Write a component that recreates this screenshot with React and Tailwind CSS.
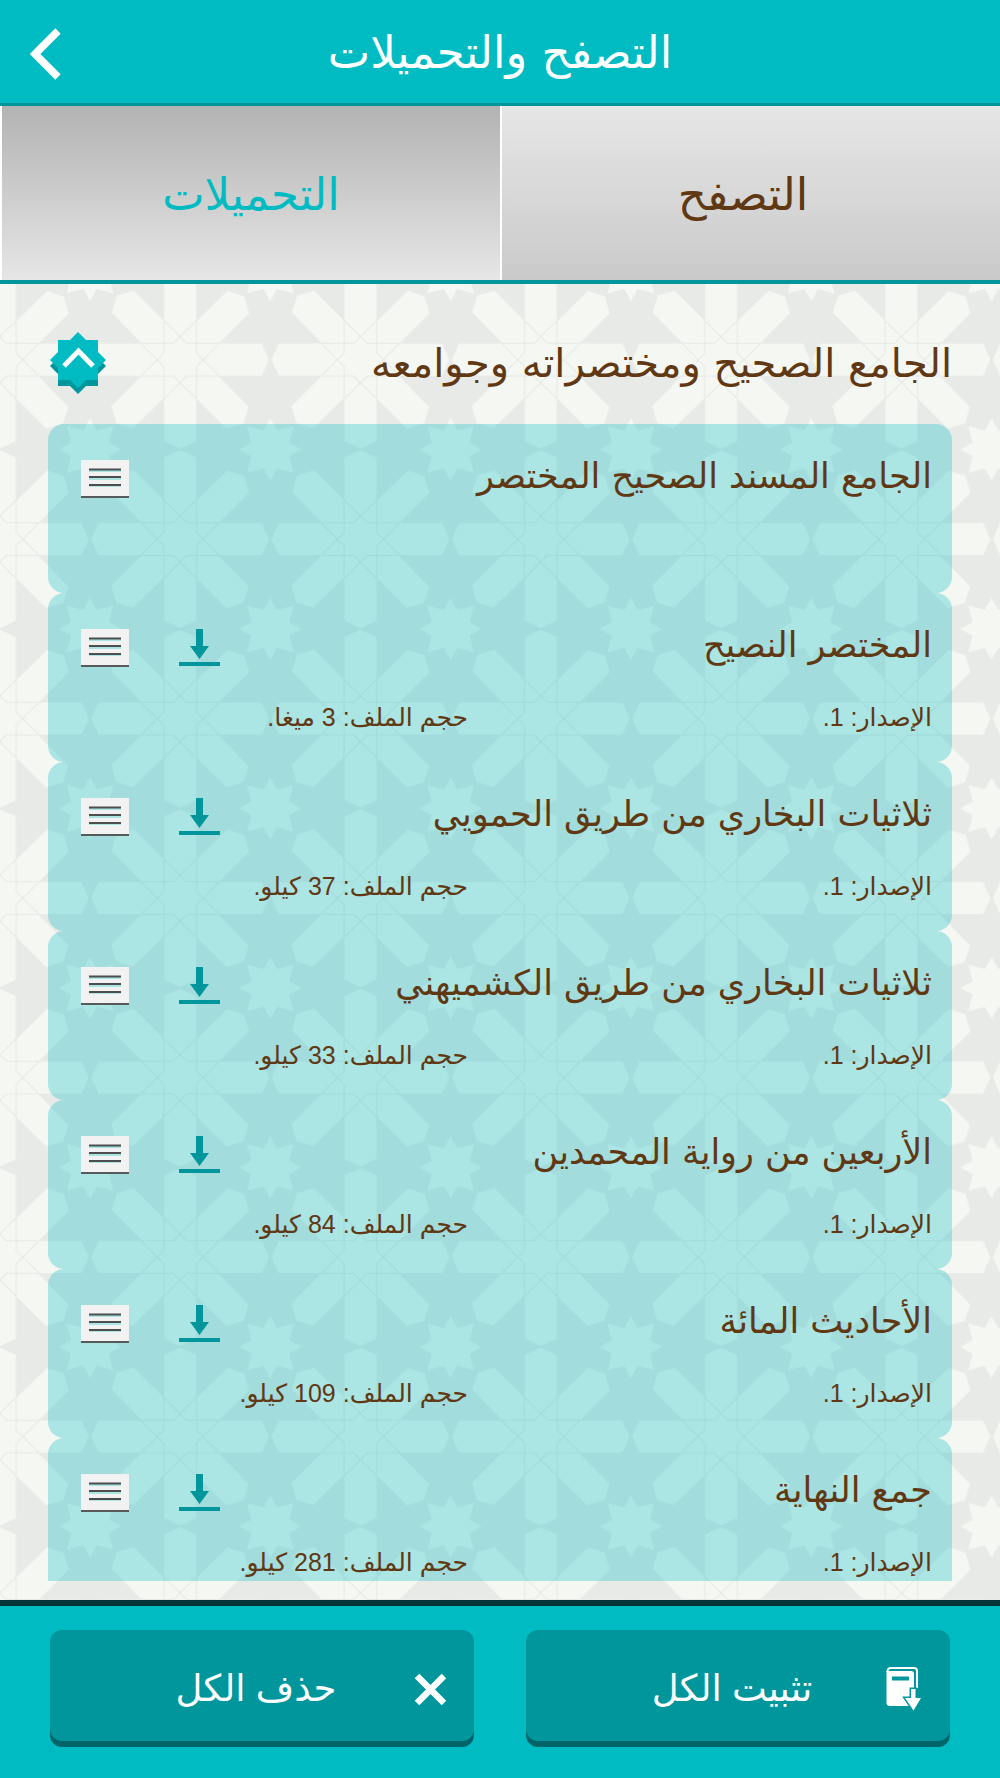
import React from 'react';

const books = [
  { title: 'الجامع المسند الصحيح المختصر' },
  { title: 'المختصر النصيح', version: '1', size: '3 ميغا' },
  { title: 'ثلاثيات البخاري من طريق الحمويي', version: '1', size: '37 كيلو' },
  { title: 'ثلاثيات البخاري من طريق الكشميهني', version: '1', size: '33 كيلو' },
  { title: 'الأربعين من رواية المحمدين', version: '1', size: '84 كيلو' },
  { title: 'الأحاديث المائة', version: '1', size: '109 كيلو' },
  { title: 'جمع النهاية', version: '1', size: '281 كيلو' },
];

const ANGLES = [0, 90, 180, 270];

const STAR = '0,-94 20,-57 70,-70 57,-20 94,0 57,20 70,70 20,57 0,94 -20,57 -70,70 -57,20 -94,0 -57,-20 -70,-70 -20,-57';

// Eight-armed flower in the middle of the tile, a small star on each corner
const Wallpaper = () => (
  <svg className="absolute inset-0 w-full h-full" aria-hidden="true">
    <defs>
      <pattern
        id="arabesque"
        width="541"
        height="538.5"
        patternUnits="userSpaceOnUse"
        patternTransform="translate(90 -14) scale(0.3333)"
      >
        <rect width="541" height="539" fill="#e8eae7" />
        <g fill="#f5f7f2">
          {[[0, 0], [541, 0], [0, 538.5], [541, 538.5]].map(([x, y]) => (
            <polygon key={`${x}-${y}`} points={STAR} transform={`translate(${x} ${y})`} />
          ))}
        </g>
        <g transform="translate(270.5 269)">
          {ANGLES.map((a) => (
            <g key={a} transform={`rotate(${a})`} fill="#f5f7f2">
              <polygon points="-48,0 -48,-245 0,-267 48,-245 48,0" />
              <polygon points="0,68 -34,34 -34,-34 142,-206 192,-190 207,-139 34,34" />
            </g>
          ))}
          {ANGLES.map((a) => (
            <g key={a} transform={`rotate(${a})`} fill="none" stroke="#e6e9e6" strokeWidth="3">
              <path d="M117 -49 H20 L-48 -117" />
              <path d="M-117 -49 H-20 L48 -117" />
            </g>
          ))}
        </g>
      </pattern>
    </defs>
    <rect width="100%" height="100%" fill="url(#arabesque)" />
  </svg>
);

const BackIcon = () => (
  <svg width="32" height="52" viewBox="0 0 32 52" fill="none" stroke="#fff" strokeWidth="7.500">
    <path d="M28 3 L5 26 L28 49" />
  </svg>
);

const CollapseIcon = () => (
  <svg width="56" height="62" viewBox="0 0 56 62">
    <g fill="#00969b">
      <rect x="8" y="14" width="40" height="40" />
      <path d="M28 6 L56 34 L28 62 L0 34 Z" />
    </g>
    <g fill="#00bcc2">
      <rect x="8" y="8" width="40" height="40" />
      <path d="M28 0 L56 28 L28 56 L0 28 Z" />
    </g>
    <path d="M14 34 L28.500 19 L43 34" fill="none" stroke="#fff" strokeWidth="5" />
  </svg>
);

const MenuIcon = () => (
  <svg width="48" height="38" viewBox="0 0 48 38">
    <rect width="48" height="36" fill="#f2f2f2" />
    <rect y="36" width="48" height="2" fill="#58595b" />
    <g fill="#abe5e2">
      <rect x="8" y="10" width="32" height="2" />
      <rect x="8" y="18" width="32" height="2" />
      <rect x="8" y="25" width="32" height="2" />
    </g>
    <g fill="#4d4d4f">
      <rect x="8" y="8.500" width="32" height="2" />
      <rect x="8" y="16" width="32" height="2" />
      <rect x="8" y="24" width="32" height="2" />
    </g>
  </svg>
);

const DownloadIcon = () => (
  <svg width="41" height="38" viewBox="0 0 41 38" fill="#00969b">
    <path d="M17 0 H24 V17 H30 L20.500 30 L11 17 H17 Z" />
    <rect y="33" width="41" height="4" />
  </svg>
);

const InstallIcon = () => (
  <svg width="36" height="44" viewBox="0 0 36 44">
    <path d="M1.500 5 Q1.500 1 5 1 H28 Q31 1 31 4 V21" fill="none" stroke="#fff" strokeWidth="2" />
    <path d="M0.500 4 L4 4 H25 Q28 4 28 7 V36 Q28 39 25 39 H4 Q0.500 39 0.500 36 Z" fill="#fff" />
    <rect x="6" y="9.500" width="17" height="4" fill="#00969b" />
    <path
      d="M25 22 H29.500 V31 H35 L27.500 43.500 L19 31 H25 Z"
      fill="#fff"
      stroke="#00969b"
      strokeWidth="3"
      paintOrder="stroke"
    />
  </svg>
);

const CloseIcon = () => (
  <svg width="36" height="44" viewBox="0 0 36 44" fill="none" stroke="#fff" strokeWidth="6.500">
    <path d="M7 9 L34 36 M34 9 L7 36" />
  </svg>
);

const BookCard = ({ book }) => (
  <li className="h-[169px] shrink-0 rounded-2xl bg-[#00bcc2]/30 pt-9 pr-5 pl-[33px]">
    <div className="flex items-start">
      <h3 className="flex-1 font-['DejaVu_Sans',sans-serif] text-[35px] leading-8">{book.title}</h3>
      <div className="flex items-start gap-[50px] flex-row-reverse">
        <button type="button" aria-label={`قائمة ${book.title}`}>
          <MenuIcon />
        </button>
        {book.size && (
          <button type="button" aria-label={`تحميل ${book.title}`}>
            <DownloadIcon />
          </button>
        )}
      </div>
    </div>
    {book.size && (
      <div className="mt-8 grid grid-cols-[464px_1fr] text-[25px] leading-9">
        <p>الإصدار: {book.version}.</p>
        <p>حجم الملف: {book.size}.</p>
      </div>
    )}
  </li>
);

const FooterButton = ({ icon, children }) => (
  <button
    type="button"
    className="flex h-[111px] flex-1 items-center rounded-xl bg-[#00969b] pt-1.5 pr-7 pl-[52px] text-[37px] shadow-[0_6px_0_#006468]"
  >
    {icon}
    <span className="flex-1 text-center">{children}</span>
  </button>
);

export default function App() {
  return (
    <div
      dir="rtl"
      lang="ar"
      className="flex h-screen flex-col overflow-hidden bg-[#f5f7f2] text-[#603813] font-['Liberation_Sans','DejaVu_Sans',sans-serif]"
    >
      <header className="relative flex h-[106px] shrink-0 items-center justify-center border-b-3 border-[#00969b] bg-[#00bcc2] pt-0.5 text-white">
        <h1 className="font-['DejaVu_Sans',sans-serif] text-[45px] leading-[52px]">التصفح والتحميلات</h1>
        <button type="button" aria-label="رجوع" className="absolute left-[30px] top-7">
          <BackIcon />
        </button>
      </header>

      <div
        role="tablist"
        className="grid h-[178px] shrink-0 grid-cols-2 gap-0.5 border-b-4 border-[#00969b] bg-white pl-0.5 text-[45px] leading-[52px]"
      >
        <button
          type="button"
          role="tab"
          aria-selected="false"
          className="bg-linear-to-b from-[#e6e6e6] to-[#cacaca] pt-1 pr-4"
        >
          التصفح
        </button>
        <button
          type="button"
          role="tab"
          aria-selected="true"
          className="bg-linear-to-b from-[#b3b3b3] to-[#e6e6e6] pt-1 text-[#00bcc2]"
        >
          التحميلات
        </button>
      </div>

      <main className="relative flex min-h-0 flex-1 flex-col px-12 pb-[19px]">
        <Wallpaper />
        <div className="relative flex h-[140px] shrink-0 items-center justify-between pl-0.5 pt-[18px]">
          <h2 className="font-['DejaVu_Sans',sans-serif] text-[40px] leading-[48px]">الجامع الصحيح ومختصراته وجوامعه</h2>
          <button type="button" aria-label="طي القسم">
            <CollapseIcon />
          </button>
        </div>
        <ul className="relative flex min-h-0 flex-1 flex-col overflow-hidden">
          {books.map((book) => (
            <BookCard key={book.title} book={book} />
          ))}
        </ul>
      </main>

      <footer className="flex h-[178px] shrink-0 gap-[52px] border-t-6 border-[#043338] bg-[#00bcc2] px-[50px] pt-6 text-white">
        <FooterButton icon={<InstallIcon />}>تثبيت الكل</FooterButton>
        <FooterButton icon={<CloseIcon />}>حذف الكل</FooterButton>
      </footer>
    </div>
  );
}
